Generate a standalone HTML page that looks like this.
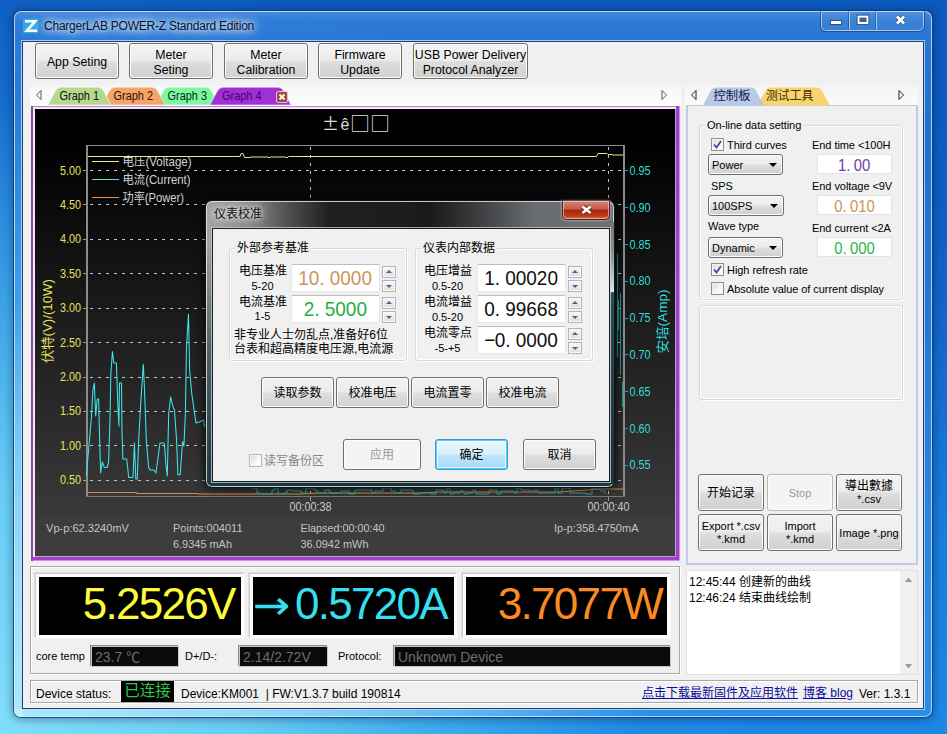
<!DOCTYPE html>
<html><head><meta charset="utf-8"><title>ChargerLAB POWER-Z Standard Edition</title>
<style>
html,body{margin:0;padding:0;}
body{width:947px;height:734px;overflow:hidden;position:relative;font-family:"Liberation Sans","Noto Sans CJK SC",sans-serif;font-size:12px;color:#000;
background:radial-gradient(ellipse 800px 800px at 0% 100%,rgba(130,222,250,1) 0,rgba(106,208,246,.97) 30%,rgba(70,182,240,.75) 55%,rgba(40,140,228,.32) 80%,rgba(40,140,228,0) 100%),linear-gradient(180deg,#0b5abf 0%,#0c5ec4 25%,#1268cc 45%,#187cdc 70%,#1d88e5 100%);}
.abs{position:absolute;}
#win{position:absolute;left:13px;top:10px;width:920px;height:708px;border-radius:8px;box-sizing:border-box;
border:1px solid rgba(10,40,100,.75);background:linear-gradient(180deg,rgba(120,180,245,.55) 0,rgba(80,155,235,.5) 10px,rgba(70,150,232,.48) 30px,rgba(70,150,235,.36) 110px,rgba(70,160,240,.3) 100%);
box-shadow:0 0 0 1px rgba(200,228,255,.85) inset,0 1px 8px 1px rgba(0,10,50,.35);}
#client{position:absolute;left:23px;top:42px;width:900px;height:666px;background:#f0f0f0;box-shadow:0 0 0 1px #1f3f78,0 0 0 2px rgba(190,222,255,.8);}
#title{position:absolute;left:44px;top:19px;font-size:12px;letter-spacing:-0.23px;color:#06102a;white-space:nowrap;text-shadow:0 0 6px #fff,0 0 10px #fff,0 0 14px rgba(255,255,255,.8);}
.btn{position:absolute;box-sizing:border-box;border:1px solid #707070;border-radius:3px;background:linear-gradient(180deg,#f3f3f3 0%,#ececec 48%,#dedede 52%,#d0d0d0 100%);
box-shadow:0 0 0 1px #fcfcfc inset;display:flex;align-items:center;justify-content:center;text-align:center;font-size:12.3px;line-height:15px;color:#000;white-space:nowrap;padding-top:3px;}
.sbtn{font-size:11px;line-height:13px;padding-top:1px;}
.dis{color:#9a9a9a;border-color:#b8b8b8;background:#f4f4f4;}
.lbl{position:absolute;font-size:11px;line-height:13px;white-space:nowrap;margin-top:1px;}
.rl{letter-spacing:-0.06px;}
.grp{position:absolute;box-sizing:border-box;border:1px solid #d8d8d8;border-radius:3px;box-shadow:0 0 0 1px #fff inset, 1px 1px 0 #fff;}
.chk{position:absolute;width:13px;height:13px;box-sizing:border-box;border:1px solid #8e8f8f;background:linear-gradient(135deg,#d8d8d8,#fdfdfd 70%);box-shadow:0 0 0 1px #f4f4f4 inset;}
.cmb{position:absolute;box-sizing:border-box;border:1px solid #707070;border-radius:3px;background:linear-gradient(180deg,#f3f3f3 0%,#ececec 48%,#dedede 52%,#d0d0d0 100%);box-shadow:0 0 0 1px #fcfcfc inset;font-size:11px;line-height:20px;padding-left:3px;}
.cmb:after{content:"";position:absolute;right:5px;top:8px;border:4px solid transparent;border-top:4.5px solid #000;border-bottom:0;}
.inp{position:absolute;box-sizing:border-box;border:1px solid #e3e3e3;background:#fff;text-align:center;white-space:nowrap;}
.inp i{font-style:normal;display:inline-block;}
.lcd{position:absolute;box-sizing:border-box;background:#000;box-shadow:0 0 0 3.300px #fdfdfd,-1px -1px 0 3.300px #b6b6b6;white-space:nowrap;overflow:hidden;}
.sbox{position:absolute;box-sizing:border-box;background:#0a0a0a;border:1px solid #c8c8c8;box-shadow:-1px -1px 0 #8a8a8a;color:#6e6e6e;font-size:14px;line-height:20px;padding-left:3px;white-space:nowrap;}
</style></head><body>
<div id="win"></div>
<div class="abs" style="left:14px;top:300px;width:9px;height:417px;border-radius:0 0 0 7px;background:linear-gradient(180deg,rgba(200,244,253,0),rgba(200,244,253,.35) 40%,rgba(200,244,253,.6) 75%,rgba(200,244,253,.7));"></div>
<div class="abs" style="left:14px;top:709px;width:640px;height:8px;border-radius:0 0 0 7px;background:linear-gradient(90deg,rgba(200,244,253,.7),rgba(200,244,253,.45) 45%,rgba(190,240,252,0));"></div>
<svg class="abs" style="left:22px;top:17px;" width="18" height="18" viewBox="22 17 18 18"><rect x="23" y="18.5" width="15.5" height="14.8" fill="#38a9e2"/><path d="M25 20 H38 L29.800 29.400 H37.2 V31.900 H24 L32.300 22.500 H25 Z" fill="#f2ffff"/></svg>
<div id="title">ChargerLAB POWER-Z Standard Edition</div>
<svg class="abs" style="left:815px;top:10px;" width="115" height="24" viewBox="815 10 115 24">
<path d="M821.500 11 V25.500 Q821.500 30.500 826.500 30.500 H918.500 Q923.500 30.500 923.500 25.500 V11" fill="rgba(255,255,255,.06)" stroke="#a9c8ee" stroke-width="1"/>
<path d="M820.500 11 V25.500 Q820.500 31.500 826.500 31.500 H918.500 Q924.500 31.500 924.500 25.500 V11" fill="none" stroke="rgba(20,50,110,.55)" stroke-width="1"/>
<path d="M849.500 11 V30 M876.500 11 V30" stroke="#a9c8ee" stroke-width="1"/><path d="M848.500 11 V30 M875.500 11 V30" stroke="rgba(20,50,110,.4)" stroke-width="1"/>
<rect x="830.500" y="20.500" width="11" height="4" fill="#fff" stroke="#3a4f78" stroke-width="1"/>
<rect x="858.500" y="16.500" width="9" height="6.500" fill="#41608f" stroke="#fff" stroke-width="2"/><rect x="857" y="15" width="12" height="9.500" fill="none" stroke="#3a4f78" stroke-width="0.8"/>
<path d="M897 16.500 L904 23.500 M904 16.500 L897 23.500" stroke="#3a4f78" stroke-width="4.200"/><path d="M897 16.500 L904 23.500 M904 16.500 L897 23.500" stroke="#fff" stroke-width="2.800"/>
</svg>
<div id="client"></div>
<div class="btn" style="left:35px;top:43px;width:84px;height:36px;">App Seting</div>
<div class="btn" style="left:129px;top:43px;width:84px;height:36px;">Meter<br>Seting</div>
<div class="btn" style="left:224px;top:43px;width:84px;height:36px;">Meter<br>Calibration</div>
<div class="btn" style="left:318px;top:43px;width:84px;height:36px;">Firmware<br>Update</div>
<div class="btn" style="left:413px;top:43px;width:115px;height:36px;">USB Power Delivery<br>Protocol Analyzer</div>
<div class="abs" style="left:30px;top:83px;width:651px;height:23px;background:linear-gradient(180deg,#f0f0f0,#f8f8f8 5px,#fdfdfd);"></div>
<svg class="abs" style="left:0;top:85px;" width="700" height="22" viewBox="0 0 700 22">
<path d="M41 5.5 L36.5 10 L41 14.5 Z" fill="none" stroke="#333" stroke-width="0.8"/>
<path d="M662 5.5 L666.5 10 L662 14.5 Z" fill="none" stroke="#333" stroke-width="0.8"/>
<path d="M156 20 L162.5 7.5 Q165 2.2 169 2.2 L206 2.2 Q210 2.2 212.5 7.5 L219 20 Z" fill="#7df7a0" stroke="#f6f6f6" stroke-width="0.6"/><path d="M102 20 L108.5 7.5 Q111 2.2 115 2.2 L152 2.2 Q156 2.2 158.5 7.5 L165 20 Z" fill="#f5a468" stroke="#f6f6f6" stroke-width="0.6"/><path d="M48 20 L54.5 7.5 Q57 2.2 61 2.2 L98 2.2 Q102 2.2 104.5 7.5 L111 20 Z" fill="#b4d98c" stroke="#f6f6f6" stroke-width="0.6"/><path d="M210 20 L216.5 7.5 Q219 2.2 223 2.2 L278 2.2 Q282 2.2 284.5 7.5 L291 20 Z" fill="#a22ed8" stroke="#f6f6f6" stroke-width="0.6"/>
<rect x="276.5" y="6.5" width="11" height="11" rx="1.5" fill="#9c4a48" stroke="#e8c8c8" stroke-width="1"/>
<path d="M279.5 9.5 L284.5 14.5 M284.5 9.5 L279.5 14.5" stroke="#fff" stroke-width="1.8"/>
<g font-family="Liberation Sans, sans-serif" font-size="12" fill="#111">
<text x="59.5" y="15" textLength="39.5" lengthAdjust="spacingAndGlyphs">Graph 1</text><text x="113.5" y="15" fill="#301008" textLength="39.5" lengthAdjust="spacingAndGlyphs">Graph 2</text><text x="167.5" y="15" fill="#0a2a10" textLength="39.5" lengthAdjust="spacingAndGlyphs">Graph 3</text><text x="222" y="15" fill="#3a0a6a" textLength="39.5" lengthAdjust="spacingAndGlyphs">Graph 4</text></g>
</svg>
<svg class="abs" style="left:31px;top:106px;" width="650" height="456" viewBox="31 106 650 456" font-family="Liberation Sans, Noto Sans CJK SC, sans-serif" font-size="12">
<defs><linearGradient id="cg" x1="0" y1="0" x2="0" y2="1"><stop offset="0" stop-color="#000"/><stop offset="0.07" stop-color="#000"/><stop offset="0.915" stop-color="#3a3a3a"/><stop offset="1" stop-color="#3a3a3a"/></linearGradient></defs>
<rect x="31" y="106" width="650" height="456" fill="#f3e4f8"/>
<rect x="31" y="106" width="648.500" height="454.500" fill="#a340c9"/>
<rect x="31" y="106" width="2" height="455" fill="#8a4aa8"/>
<rect x="33" y="106" width="643" height="1" fill="#b884d0"/>
<rect x="33" y="107" width="643" height="450" fill="#f6e6fa"/>
<rect x="35" y="109" width="641" height="448" fill="#b8a4c0"/>
<rect x="35" y="109" width="640" height="447" fill="url(#cg)"/>
<rect x="35" y="518" width="640" height="38" fill="#3d3d3d"/>
<g shape-rendering="crispEdges" fill="none">
<path d="M83 170.5 H86" stroke="#9a9a9a"/><path d="M88 170.5 H623" stroke="#c4c4c4" stroke-dasharray="3 5" stroke-dashoffset="-2"/><path d="M83 204.5 H86" stroke="#9a9a9a"/><path d="M88 204.5 H623" stroke="#c4c4c4" stroke-dasharray="3 5" stroke-dashoffset="-2"/><path d="M83 239.5 H86" stroke="#9a9a9a"/><path d="M88 239.5 H623" stroke="#c4c4c4" stroke-dasharray="3 5" stroke-dashoffset="-2"/><path d="M83 273.5 H86" stroke="#9a9a9a"/><path d="M88 273.5 H623" stroke="#c4c4c4" stroke-dasharray="3 5" stroke-dashoffset="-2"/><path d="M83 308.5 H86" stroke="#9a9a9a"/><path d="M88 308.5 H623" stroke="#c4c4c4" stroke-dasharray="3 5" stroke-dashoffset="-2"/><path d="M83 342.5 H86" stroke="#9a9a9a"/><path d="M88 342.5 H623" stroke="#c4c4c4" stroke-dasharray="3 5" stroke-dashoffset="-2"/><path d="M83 377.5 H86" stroke="#9a9a9a"/><path d="M88 377.5 H623" stroke="#c4c4c4" stroke-dasharray="3 5" stroke-dashoffset="-2"/><path d="M83 411.5 H86" stroke="#9a9a9a"/><path d="M88 411.5 H623" stroke="#c4c4c4" stroke-dasharray="3 5" stroke-dashoffset="-2"/><path d="M83 445.5 H86" stroke="#9a9a9a"/><path d="M88 445.5 H623" stroke="#c4c4c4" stroke-dasharray="3 5" stroke-dashoffset="-2"/><path d="M83 480.5 H86" stroke="#9a9a9a"/><path d="M88 480.5 H623" stroke="#c4c4c4" stroke-dasharray="3 5" stroke-dashoffset="-2"/>
<path d="M310.5 147 V495 M608.5 147 V495" stroke="#c4c4c4" stroke-dasharray="3 5"/>
<path d="M310.5 497 V501 M608.5 497 V501" stroke="#9a9a9a"/>
<path d="M87 145 V497 M624 145 V497" stroke="#8c8c8c" stroke-width="2"/>
<path d="M86 145.5 H625 M86 496 H625" stroke="#8c8c8c" stroke-width="1"/>
<path d="M86 496.5 H625" stroke="#777" stroke-width="1"/>
</g>
<g fill="#dcdcdc" font-family="Noto Sans CJK SC, Liberation Sans, sans-serif"><text x="322" y="130" font-size="17">±</text><text x="340.500" y="130" font-size="16" font-family="Liberation Sans, sans-serif">ê</text><text x="350" y="130.500" font-size="19" textLength="20" lengthAdjust="spacingAndGlyphs">□</text><text x="370" y="130.500" font-size="19" textLength="20" lengthAdjust="spacingAndGlyphs">□</text></g>
<g fill="#e8e25c"><text x="81" y="174.5" text-anchor="end" textLength="21" lengthAdjust="spacingAndGlyphs">5.00</text><text x="81" y="208.9" text-anchor="end" textLength="21" lengthAdjust="spacingAndGlyphs">4.50</text><text x="81" y="243.3" text-anchor="end" textLength="21" lengthAdjust="spacingAndGlyphs">4.00</text><text x="81" y="277.8" text-anchor="end" textLength="21" lengthAdjust="spacingAndGlyphs">3.50</text><text x="81" y="312.2" text-anchor="end" textLength="21" lengthAdjust="spacingAndGlyphs">3.00</text><text x="81" y="346.6" text-anchor="end" textLength="21" lengthAdjust="spacingAndGlyphs">2.50</text><text x="81" y="381.0" text-anchor="end" textLength="21" lengthAdjust="spacingAndGlyphs">2.00</text><text x="81" y="415.4" text-anchor="end" textLength="21" lengthAdjust="spacingAndGlyphs">1.50</text><text x="81" y="449.9" text-anchor="end" textLength="21" lengthAdjust="spacingAndGlyphs">1.00</text><text x="81" y="484.3" text-anchor="end" textLength="21" lengthAdjust="spacingAndGlyphs">0.50</text></g>
<g fill="#35dada"><path d="M625 170.5 H628" stroke="#1fa0a0"/><text x="629.5" y="175.0" textLength="21" lengthAdjust="spacingAndGlyphs">0.95</text><path d="M625 207.5 H628" stroke="#1fa0a0"/><text x="629.5" y="211.8" textLength="21" lengthAdjust="spacingAndGlyphs">0.90</text><path d="M625 244.5 H628" stroke="#1fa0a0"/><text x="629.5" y="248.6" textLength="21" lengthAdjust="spacingAndGlyphs">0.85</text><path d="M625 281.5 H628" stroke="#1fa0a0"/><text x="629.5" y="285.4" textLength="21" lengthAdjust="spacingAndGlyphs">0.80</text><path d="M625 318.5 H628" stroke="#1fa0a0"/><text x="629.5" y="322.2" textLength="21" lengthAdjust="spacingAndGlyphs">0.75</text><path d="M625 354.5 H628" stroke="#1fa0a0"/><text x="629.5" y="359.0" textLength="21" lengthAdjust="spacingAndGlyphs">0.70</text><path d="M625 391.5 H628" stroke="#1fa0a0"/><text x="629.5" y="395.8" textLength="21" lengthAdjust="spacingAndGlyphs">0.65</text><path d="M625 428.5 H628" stroke="#1fa0a0"/><text x="629.5" y="432.6" textLength="21" lengthAdjust="spacingAndGlyphs">0.60</text><path d="M625 465.5 H628" stroke="#1fa0a0"/><text x="629.5" y="469.4" textLength="21" lengthAdjust="spacingAndGlyphs">0.55</text></g>
<text transform="translate(51.5 321) rotate(-90)" text-anchor="middle" fill="#e8e25c" font-size="13" textLength="84" lengthAdjust="spacingAndGlyphs">伏特(V)/(10W)</text>
<text transform="translate(667 321.500) rotate(-90)" text-anchor="middle" fill="#35dada" font-size="13" textLength="64" lengthAdjust="spacingAndGlyphs">安培(Amp)</text>
<g fill="none" stroke-width="1">
<path d="M92 161.5 H119" stroke="#f0e890"/><path d="M92 179.5 H119" stroke="#58e0d8"/><path d="M92 197.5 H119" stroke="#f08c50"/>
</g>
<g fill="#d2d2d2" font-size="12"><text x="122.5" y="166" textLength="69" lengthAdjust="spacingAndGlyphs">电压(Voltage)</text><text x="122.5" y="184" textLength="68" lengthAdjust="spacingAndGlyphs">电流(Current)</text><text x="122.5" y="202" textLength="61.5" lengthAdjust="spacingAndGlyphs">功率(Power)</text></g>
<path d="M88 156.5 H240 L241 153.5 L243 153.5 L244.5 157.5 H250 L251 157 H268 L269 158 L270 157 H286 L287 158 L288.5 156.5 H596.5 L598 153.5 H607 L608 154.5 H612 L613 155 H623" fill="none" stroke="#ece68c" stroke-width="1"/>
<path d="M88 492.5 H136 L137 493.5 H198 L199 494 H300 L320 493 H420 L440 492 H560 L600 489 H623" fill="none" stroke="#e88a3c" stroke-width="1.2"/>
<path d="M86.3 476.0 L88.6 450.0 L91.5 416.0 L92.9 390.0 L94.3 383.0 L95.7 416.0 L97.2 399.0 L98.6 399.0 L99.5 433.0 L100.6 473.0 L102.3 462.0 L104.3 467.5 L107.2 467.5 L108.6 462.0 L110.0 419.0 L110.9 373.0 L112.4 351.5 L113.8 363.0 L116.4 363.0 L117.8 404.5 L118.9 426.0 L119.5 383.0 L121.5 383.0 L122.0 433.0 L122.9 459.0 L126.7 459.0 L128.7 477.5 L133.0 477.5 L134.4 443.0 L135.8 479.0 L137.3 479.0 L138.7 439.0 L141.0 399.0 L143.3 364.4 L144.4 387.0 L146.4 441.7 L148.7 467.5 L150.0 470.0 L153.9 470.0 L155.9 473.0 L157.9 459.0 L160.0 443.0 L163.6 443.0 L164.5 444.6 L165.9 464.6 L167.3 476.0 L168.7 413.0 L170.7 397.0 L173.0 407.0 L174.5 410.0 L176.5 439.0 L177.9 474.7 L180.2 474.7 L182.5 441.7 L183.9 446.0 L185.4 413.0 L186.5 347.0 L188.5 314.0 L189.6 370.0 L191.7 393.0 L194.0 410.0 L196.0 423.0 L200.0 421.7 L203.7 420.0 L204.5 427.0 L206.0 424.0" fill="none" stroke="#3ee6ee" stroke-width="1.05" stroke-linejoin="round"/>
<path d="M252.0 488.0 L257.0 488.0 L257.0 493.0 L260.0 493.0 L260.0 494.0 L272.0 494.0 L272.0 490.0 L275.0 490.0 L275.0 488.0 L278.0 488.0 L278.0 494.0 L284.0 494.0 L284.0 493.0 L287.0 493.0 L287.0 490.0 L293.0 490.0 L293.0 491.0 L301.0 491.0 L301.0 493.0 L306.0 493.0 L306.0 488.0 L314.0 488.0 L314.0 490.0 L317.0 490.0 L317.0 493.0 L325.0 493.0 L325.0 490.0 L330.0 490.0 L330.0 493.0 L338.0 493.0 L338.0 493.0 L341.0 493.0 L341.0 491.0 L349.0 491.0 L349.0 494.0 L355.0 494.0 L355.0 490.0 L360.0 490.0 L360.0 490.0 L372.0 490.0 L372.0 493.0 L375.0 493.0 L375.0 491.0 L383.0 491.0 L383.0 488.0 L391.0 488.0 L391.0 491.0 L395.0 491.0 L395.0 493.0 L401.0 493.0 L401.0 490.0 L413.0 490.0 L413.0 494.0 L419.0 494.0 L419.0 493.0 L431.0 493.0 L431.0 494.0 L436.0 494.0 L436.0 490.0 L444.0 490.0 L444.0 493.0 L447.0 493.0 L447.0 488.0 L450.0 488.0 L450.0 494.0 L454.0 494.0 L454.0 493.0 L460.0 493.0 L460.0 491.0 L464.0 491.0 L464.0 494.0 L468.0 494.0 L468.0 493.0 L473.0 493.0 L473.0 490.0 L476.0 490.0 L476.0 494.0 L481.0 494.0 L481.0 494.0 L489.0 494.0 L489.0 490.0 L497.0 490.0 L497.0 494.0 L501.0 494.0 L501.0 491.0 L509.0 491.0 L509.0 491.0 L514.0 491.0 L514.0 493.0 L517.0 493.0 L517.0 488.0 L521.0 488.0 L521.0 490.0 L529.0 490.0 L529.0 491.0 L535.0 491.0 L535.0 490.0 L538.0 490.0 L538.0 493.0 L543.0 493.0 L543.0 493.0 L555.0 493.0 L555.0 488.0 L558.0 488.0 L558.0 493.0 L562.0 493.0 L562.0 488.0 L570.0 488.0 L570.0 493.0 L573.0 493.0 L573.0 493.0 L581.0 493.0 L581.0 493.0 L586.0 493.0 L586.0 494.0 L592.0 494.0 L592.0 488.0 L600.0 488.0 L600.0 491.0 L605.0 491.0 L605.0 494.0" fill="none" stroke="#1fb0a8" stroke-width="1"/>
<path d="M617.5 254 V357 M618.5 300 V330 M620.5 293 V375 M622.5 382 V407" fill="none" stroke="#189c9c" stroke-width="1"/>
<g fill="#c8c8c8"><text x="310.5" y="511" text-anchor="middle" textLength="42" lengthAdjust="spacingAndGlyphs">00:00:38</text><text x="608.5" y="511" text-anchor="middle" textLength="42" lengthAdjust="spacingAndGlyphs">00:00:40</text></g>
<g fill="#c4c4c4" font-size="11.5"><text x="46" y="532" textLength="83" lengthAdjust="spacingAndGlyphs">Vp-p:62.3240mV</text><text x="173" y="532" textLength="69.5" lengthAdjust="spacingAndGlyphs">Points:004011</text><text x="173" y="548" textLength="59" lengthAdjust="spacingAndGlyphs">6.9345 mAh</text><text x="300.500" y="532" textLength="84" lengthAdjust="spacingAndGlyphs">Elapsed:00:00:40</text><text x="300.500" y="548" textLength="68" lengthAdjust="spacingAndGlyphs">36.0942 mWh</text><text x="554" y="532" textLength="84.500" lengthAdjust="spacingAndGlyphs">Ip-p:358.4750mA</text></g>
</svg>
<div class="abs" style="left:685px;top:85px;width:233px;height:21px;background:linear-gradient(180deg,#f4f4f4,#fbfbfb);"></div>
<div class="abs" style="left:686px;top:105px;width:232px;height:460px;box-sizing:border-box;border:2px solid #bccbe8;border-top-width:1px;background:#f0f0f0;"></div>
<svg class="abs" style="left:685px;top:85px;" width="233" height="22" viewBox="685 0 233 22" font-family="Liberation Sans, Noto Sans CJK SC, sans-serif">
<path d="M696 5.5 L691.5 10 L696 14.5 Z" fill="none" stroke="#222"/>
<path d="M899 5.5 L903.5 10 L899 14.5 Z" fill="none" stroke="#222"/>
<path d="M757 20.5 L766 5 Q767.5 2.5 770.5 2.5 L817 2.5 Q820 2.5 821.5 5 L830 20.5 Z" fill="#f9d36e"/>
<path d="M703 20.5 L711 5 Q712.5 2.5 715.5 2.5 L751 2.5 Q754 2.5 755.5 5 L764 20.5 Z" fill="#b9c9ea"/>
<text x="713.5" y="15" font-size="12" fill="#102040" textLength="37" lengthAdjust="spacingAndGlyphs">控制板</text>
<text x="766" y="15" font-size="12" fill="#403000" textLength="47.5" lengthAdjust="spacingAndGlyphs">测试工具</text>
</svg>
<div class="grp" style="left:699px;top:125px;width:204px;height:175px;"></div>
<div class="lbl rl" style="left:705px;top:118px;background:#f0f0f0;padding:0 2px;">On-line data setting</div>
<div class="chk" style="left:711px;top:138px;"></div>
<svg class="abs" style="left:711px;top:138px;" width="13" height="13"><path d="M3 6.5 L5.5 9.5 L10 3" fill="none" stroke="#3a4f9a" stroke-width="1.8"/></svg>
<div class="lbl rl" style="left:727px;top:138px;">Third curves</div>
<div class="lbl rl" style="left:812px;top:138px;">End time &lt;100H</div>
<div class="cmb" style="left:708px;top:154px;width:75px;height:21px;">Power</div>
<div class="inp" style="left:817px;top:154px;width:75px;height:20px;font-size:15.8px;line-height:21px;color:#6a3fa8;"><b style="font-weight:normal;display:inline-block;transform:scaleX(.94)">1<i style="width:8px;text-align:left">.</i>00</b></div>
<div class="lbl rl" style="left:711px;top:179px;">SPS</div>
<div class="lbl rl" style="left:812px;top:179px;">End voltage &lt;9V</div>
<div class="cmb" style="left:708px;top:195px;width:76px;height:21px;">100SPS</div>
<div class="inp" style="left:817px;top:195px;width:75px;height:20px;font-size:15.8px;line-height:21px;color:#cf9252;"><b style="font-weight:normal;display:inline-block;transform:scaleX(.94)">0<i style="width:8px;text-align:left">.</i>010</b></div>
<div class="lbl rl" style="left:708px;top:219px;">Wave type</div>
<div class="lbl rl" style="left:812px;top:221px;">End current &lt;2A</div>
<div class="cmb" style="left:708px;top:237px;width:75px;height:21px;">Dynamic</div>
<div class="inp" style="left:817px;top:237px;width:75px;height:20px;font-size:15.8px;line-height:21px;color:#28b848;"><b style="font-weight:normal;display:inline-block;transform:scaleX(.94)">0<i style="width:8px;text-align:left">.</i>000</b></div>
<div class="chk" style="left:711px;top:263px;"></div>
<svg class="abs" style="left:711px;top:263px;" width="13" height="13"><path d="M3 6.5 L5.5 9.5 L10 3" fill="none" stroke="#3a4f9a" stroke-width="1.8"/></svg>
<div class="lbl rl" style="left:727px;top:263px;">High refresh rate</div>
<div class="chk" style="left:711px;top:282px;"></div>
<div class="lbl rl" style="left:727px;top:282px;">Absolute value of current display</div>
<div class="grp" style="left:699px;top:305px;width:204px;height:95px;"></div>
<div class="btn sbtn" style="left:698px;top:474px;width:66px;height:37px;font-size:12px;">开始记录</div>
<div class="btn sbtn dis" style="left:767px;top:474px;width:66px;height:37px;">Stop</div>
<div class="btn sbtn" style="left:836px;top:474px;width:66px;height:37px;"><div><span style="font-size:12px">導出數據</span><br>*.csv</div></div>
<div class="btn sbtn" style="left:698px;top:514px;width:66px;height:37px;">Export *.csv<br>*.kmd</div>
<div class="btn sbtn" style="left:767px;top:514px;width:66px;height:37px;">Import<br>*.kmd</div>
<div class="btn sbtn" style="left:836px;top:514px;width:66px;height:37px;">Image *.png</div>
<div class="abs" style="left:30px;top:566px;width:650px;height:108px;box-sizing:border-box;border:1px solid #a8a8a8;box-shadow:1px 1px 0 #fff, 1px 1px 0 #fff inset;"></div>
<div class="lcd" style="left:39.300px;top:576.500px;width:201.400px;height:58.200px;text-align:right;color:#fcfc3c;font-size:44px;line-height:54px;padding-right:6px;letter-spacing:-1.7px;">5.2526V</div>
<div class="lcd" style="left:253.300px;top:576.500px;width:200.700px;height:58.200px;text-align:right;color:#35def0;font-size:44px;line-height:54px;padding-right:7px;letter-spacing:-1.7px;"><span style="font-family:'DejaVu Sans','Liberation Sans',sans-serif;font-size:40px;letter-spacing:0;display:inline-block;transform:scaleX(1.12);transform-origin:100% 50%;margin-right:4px;">→</span>0.5720A</div>
<div class="lcd" style="left:466px;top:576.500px;width:201px;height:58.200px;text-align:right;color:#fa8a24;font-size:44px;line-height:54px;padding-right:5px;letter-spacing:-1.7px;">3.7077W</div>
<div class="lbl" style="left:36px;top:649px;">core temp</div>
<div class="sbox" style="left:91px;top:646px;width:88px;height:21px;">23.7 ℃</div>
<div class="lbl" style="left:185px;top:649px;">D+/D-:</div>
<div class="sbox" style="left:239px;top:646px;width:89px;height:21px;">2.14/2.72V</div>
<div class="lbl" style="left:338px;top:649px;">Protocol:</div>
<div class="sbox" style="left:394px;top:646px;width:277px;height:21px;">Unknown Device</div>
<div class="abs" style="left:686px;top:570px;width:232px;height:105px;box-sizing:border-box;border:1px solid #e0e0e0;background:#fff;"></div>
<div class="abs" style="left:900px;top:571px;width:17px;height:103px;background:#f0f0f0;"></div>
<svg class="abs" style="left:900px;top:571px;" width="17" height="103"><path d="M5 11 L8.5 6.5 L12 11 Z" fill="#9a9a9a"/><path d="M5 93 L8.5 97.500 L12 93 Z" fill="#9a9a9a"/></svg>
<div class="lbl" style="left:689px;top:574px;font-size:12px;line-height:15.5px;">12:45:44 创建新的曲线<br>12:46:24 结束曲线绘制</div>
<div class="abs" style="left:30px;top:680px;width:888px;height:23px;box-sizing:border-box;border:1px solid #a8a8a8;box-shadow:1px 1px 0 #fff, 1px 1px 0 #fff inset;"></div>
<div class="lbl" style="left:36px;top:687px;font-size:12px;">Device status:</div>
<div class="abs" style="left:121px;top:681px;width:53px;height:21px;background:#000;color:#2fc84a;font-size:15.5px;line-height:20px;text-align:center;white-space:nowrap;">已连接</div>
<div class="lbl" style="left:181px;top:687px;font-size:12px;">Device:KM001&nbsp; | FW:V1.3.7 build 190814</div>
<div class="lbl" style="left:642px;top:686px;font-size:12px;color:#0c0c9c;text-decoration:underline;">点击下载最新固件及应用软件</div>
<div class="lbl" style="left:803px;top:686px;font-size:12px;color:#0c0c9c;text-decoration:underline;">博客 blog</div>
<div class="lbl" style="left:859px;top:687px;font-size:12px;">Ver: 1.3.1</div>
<style>
#dlg{position:absolute;left:205px;top:200px;width:410px;height:288px;box-sizing:border-box;border:1px solid #141414;border-radius:7px;
background:linear-gradient(180deg,rgba(30,50,56,0) 0,rgba(30,50,56,0) 40px,rgba(30,50,56,.6) 150px,rgba(24,52,60,.96) 100%),linear-gradient(90deg,#a4a4a4 0,#8c8c8c 10%,#505050 20%,#202020 30%,#1a1a1a 55%,#3c3e40 67%,#686c70 80%,#6c7074 100%);
box-shadow:0 0 0 1px rgba(225,240,246,.8) inset,0 0 9px 1px rgba(0,0,0,.75);}
#dcl{position:absolute;left:213px;top:229px;width:396px;height:252px;background:#f0f0f0;box-shadow:0 0 0 1px #1d1d1d,0 0 0 2px rgba(190,215,225,.75);}
.d{position:absolute;font-size:12px;line-height:13px;white-space:nowrap;font-family:"Liberation Sans","Noto Sans CJK SC",sans-serif;}
.dc{text-align:center;}
.num{position:absolute;box-sizing:border-box;border:1px solid #e6e6e6;border-radius:2px;background:#fff;text-align:center;white-space:nowrap;font-size:20.6px;line-height:25px;height:28px;width:89px;border-top-color:#bdbdbd;}
.num b{font-weight:normal;display:inline-block;transform:scaleX(.92);transform-origin:50% 50%;}
.num i{font-style:normal;display:inline-block;width:11.4px;text-align:left;}
.spn{position:absolute;width:14px;height:12px;box-sizing:border-box;border:1px solid #b4b4b4;background:linear-gradient(180deg,#f6f6f6,#dedede);box-shadow:0 0 0 1px #fafafa inset;}
.spn:after{content:"";position:absolute;left:3px;top:3px;border:3px solid transparent;}
.up:after{border-bottom:3.5px solid #4f5f9a;border-top:0;}
.dn:after{border-top:3.5px solid #4f5f9a;border-bottom:0;top:3.5px;}
.dbtn{font-size:12px;border-color:#707070;padding-top:1px;}
</style>
<div id="dlg"></div>
<div class="abs" style="left:610px;top:222px;width:4px;height:262px;background:linear-gradient(180deg,#72767a 0,#8e9296 12%,#c4c8ca 22%,#e4e8ea 26.500%,#2c4c54 27%,#24404a 60%,#1c343c 100%);"></div>
<div class="d" style="left:214px;top:208px;color:#111;text-shadow:0 0 5px rgba(255,255,255,.8),0 0 9px rgba(255,255,255,.7),0 0 12px rgba(255,255,255,.6);">仪表校准</div>
<div class="abs" style="left:562px;top:201px;width:48px;height:19px;box-sizing:border-box;border:1px solid #5a1a14;border-top:0;border-radius:0 0 5px 5px;background:linear-gradient(180deg,#d9857a 0%,#c6594a 45%,#a92410 50%,#b83a1c 80%,#d8683a 100%);box-shadow:0 0 0 1px rgba(255,230,225,.55) inset, 0 0 2px 1px rgba(255,255,255,.35);"></div>
<svg class="abs" style="left:579px;top:203px;" width="16" height="14"><path d="M3.5 3.5 L11.500 10 M11.500 3.5 L3.5 10" stroke="#50201a" stroke-width="4.200" fill="none"/><path d="M3.5 3.5 L11.500 10 M11.500 3.5 L3.5 10" stroke="#fff" stroke-width="2.800" fill="none"/></svg>
<div id="dcl"></div>
<div class="grp" style="left:229px;top:248px;width:178px;height:113px;"></div>
<div class="d" style="left:235px;top:242px;background:#f0f0f0;padding:0 2px;">外部参考基准</div>
<div class="d" style="left:239px;top:265px;">电压基准</div>
<div class="d dc" style="left:239px;top:280px;width:47px;font-size:11px;">5-20</div>
<div class="num" style="left:291px;top:264px;color:#cf9456;"><b>10<i>.</i>0000</b></div>
<div class="spn up" style="left:382px;top:266px;"></div><div class="spn dn" style="left:382px;top:280px;"></div>
<div class="d" style="left:239px;top:296px;">电流基准</div>
<div class="d dc" style="left:239px;top:310px;width:47px;font-size:11px;">1-5</div>
<div class="num" style="left:291px;top:295px;color:#22b03e;"><b>2<i>.</i>5000</b></div>
<div class="spn up" style="left:382px;top:297px;"></div><div class="spn dn" style="left:382px;top:311px;"></div>
<div class="d" style="left:234px;top:329px;">非专业人士勿乱点,准备好6位</div>
<div class="d" style="left:234px;top:343px;">台表和超高精度电压源,电流源</div>
<div class="grp" style="left:415px;top:248px;width:178px;height:113px;"></div>
<div class="d" style="left:421px;top:242px;background:#f0f0f0;padding:0 2px;">仪表内部数据</div>
<div class="d" style="left:424px;top:265px;">电压增益</div>
<div class="d dc" style="left:424px;top:280px;width:47px;font-size:11px;">0.5-20</div>
<div class="num" style="left:477px;top:264px;color:#111;"><b>1<i>.</i>00020</b></div>
<div class="spn up" style="left:568px;top:266px;"></div><div class="spn dn" style="left:568px;top:280px;"></div>
<div class="d" style="left:424px;top:296px;">电流增益</div>
<div class="d dc" style="left:424px;top:311px;width:47px;font-size:11px;">0.5-20</div>
<div class="num" style="left:477px;top:295px;color:#111;"><b>0<i>.</i>99668</b></div>
<div class="spn up" style="left:568px;top:297px;"></div><div class="spn dn" style="left:568px;top:311px;"></div>
<div class="d" style="left:424px;top:327px;">电流零点</div>
<div class="d dc" style="left:424px;top:342px;width:47px;font-size:11px;">-5-+5</div>
<div class="num" style="left:477px;top:326px;color:#111;"><b><i style="text-align:center">−</i>0<i>.</i>0000</b></div>
<div class="spn up" style="left:568px;top:328px;"></div><div class="spn dn" style="left:568px;top:342px;"></div>
<div class="btn dbtn" style="left:261px;top:377px;width:73px;height:31px;">读取参数</div>
<div class="btn dbtn" style="left:336px;top:377px;width:73px;height:31px;">校准电压</div>
<div class="btn dbtn" style="left:411px;top:377px;width:73px;height:31px;">电流置零</div>
<div class="btn dbtn" style="left:486px;top:377px;width:73px;height:31px;">校准电流</div>
<div class="chk" style="left:249px;top:454px;width:13px;height:13px;border-color:#b8b8b8;"></div>
<div class="d" style="left:264px;top:455px;color:#868686;">读写备份区</div>
<div class="btn dbtn dis" style="left:343px;top:439px;width:78px;height:31px;">应用</div>
<div class="btn dbtn" style="left:435px;top:439px;width:73px;height:31px;border-color:#3a9ad0;background:linear-gradient(180deg,#eaf6fd 0%,#d9f0fc 48%,#bee6fd 52%,#a7d9f5 100%);box-shadow:0 0 0 1px #50d0f8 inset,0 0 0 2px rgba(255,255,255,.6) inset;">确定</div>
<div class="btn dbtn" style="left:523px;top:439px;width:73px;height:31px;">取消</div>
</body></html>
